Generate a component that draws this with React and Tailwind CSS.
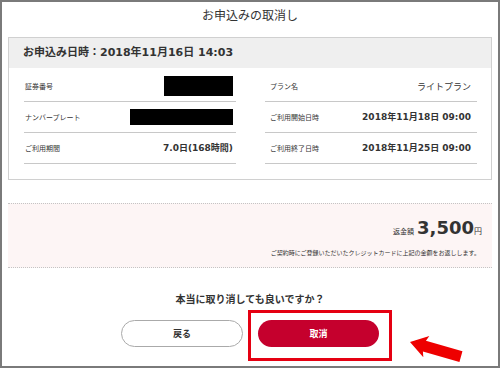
import React from 'react';

const latin = "font-['DejaVu_Sans','Noto_Sans_CJK_JP',sans-serif]";

const leftRows = [
  { label: '証券番号', box: 'w-[69px] h-[20px]' },
  { label: 'ナンバープレート', box: 'w-[103px] h-[16px]' },
  { label: 'ご利用期間', value: '7.0日(168時間)' },
];

const rightRows = [
  { label: 'プラン名', value: 'ライトプラン', plain: true },
  { label: 'ご利用開始日時', value: '2018年11月18日 09:00' },
  { label: 'ご利用終了日時', value: '2018年11月25日 09:00' },
];

const Row = ({ row, labelPad, valuePad }) => (
  <div className="h-[31px] flex items-center justify-between border-b border-[#c8c8c8]">
    <span className={`text-[7px] leading-none text-[#333] ${labelPad}`}>{row.label}</span>
    {row.box ? (
      <span className={`bg-black mr-[3px] ${row.box}`} />
    ) : (
      <span
        className={
          row.plain
            ? `text-[9px] leading-none text-[#333] ${valuePad}`
            : `${latin} text-[9px] font-bold leading-none text-[#333] ${valuePad}`
        }
      >
        {row.value}
      </span>
    )}
  </div>
);

export default function App() {
  return (
    <div className="w-[500px] h-[368px] border-2 border-[#7a7a7a] bg-white relative overflow-hidden font-['Noto_Sans_CJK_JP',sans-serif] text-[#333]">
      <div className="h-[35px] pt-[5px] text-center text-[12px] leading-[16px]">お申込みの取消し</div>

      {/* application card */}
      <div className="mx-[6px] border border-[#d0d0d0]">
        <div className={`h-[30px] bg-[#efefef] flex items-center pl-[14px] text-[11px] font-bold ${latin}`}>
          お申込み日時：2018年11月16日 14:03
        </div>
        <div className="pt-[3px] pb-[15px] pl-[15px] pr-[14px] grid grid-cols-[212px_212px] gap-x-[29px]">
          <div>
            {leftRows.map((r) => (
              <Row key={r.label} row={r} labelPad="pl-[1px]" valuePad="pr-[3px]" />
            ))}
          </div>
          <div>
            {rightRows.map((r) => (
              <Row key={r.label} row={r} labelPad="pl-[5px]" valuePad="pr-[6px]" />
            ))}
          </div>
        </div>
      </div>

      {/* refund */}
      <div className="mx-[6px] mt-[23px] h-[65px] border-y border-dotted border-[#c4c4c4] bg-[#fdf5f5] flex flex-col items-end pr-[10px]">
        <div className="mt-[13px] flex items-baseline leading-[22px]">
          <span className="text-[7px] mr-[3px]">返金額</span>
          <span className={`${latin} text-[18px] font-bold`}>3,500</span>
          <span className="text-[8px]">円</span>
        </div>
        <div className="mt-[7px] mr-[2px] text-[6px] leading-[8px]">
          ご契約時にご登録いただいたクレジットカードに上記の金額をお返しします。
        </div>
      </div>

      <div className="mt-[26px] text-center text-[10px] font-bold leading-[10px]">本当に取り消しても良いですか？</div>

      <div className="mt-[16px] flex justify-center gap-[15px]">
        <button className="w-[122px] h-[27px] rounded-full border border-[#aaa] bg-white text-[9px] font-bold text-[#333] flex items-center justify-center">
          戻る
        </button>
        <button className="w-[121px] h-[27px] rounded-full bg-[#c5002d] text-[9px] font-bold text-white flex items-center justify-center">
          取消
        </button>
      </div>

      {/* annotation overlay */}
      <div className="absolute left-[246px] top-[308px] w-[144px] h-[51px] border-[3px] border-[#e50012] pointer-events-none" />
      <svg className="absolute left-0 top-0 pointer-events-none" width="496" height="364" viewBox="0 0 496 364">
        <polygon
          transform="translate(408 340) rotate(16)"
          points="0,0 17,-11 15,-5.5 53,-5.5 53,5.5 15,5.5 17,11"
          fill="#ee0000"
        />
      </svg>
    </div>
  );
}
